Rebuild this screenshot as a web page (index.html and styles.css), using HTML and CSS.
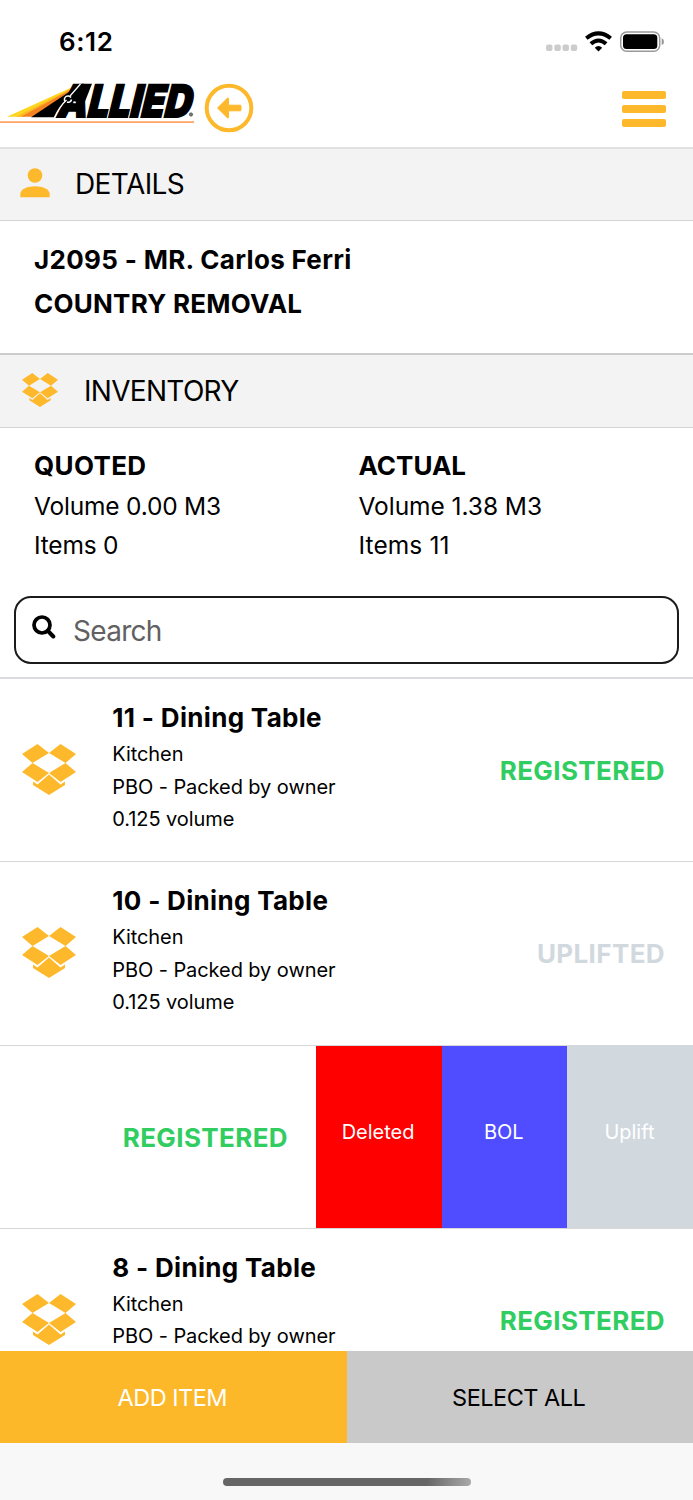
FILE: index.html
```html
<!DOCTYPE html>
<html lang="en">
<head>
<meta charset="utf-8">
<title>Allied Inventory</title>
<link rel="stylesheet" href="styles.css">
</head>
<body>
<svg width="0" height="0" class="defs">
  <symbol id="box" viewBox="0 0 54 51">
    <path d="M15.500 0 27 9 38.500 0 54 10 43.500 19 54 28 38.500 38 27 29 15.500 38 0 28 10.500 19 0 10Z M27 9 10.500 19 27 29 43.500 19Z" fill-rule="evenodd"/>
    <path d="M27 30.500 38.500 40.500 43 37.500V41L27 51 11 41V37.500L15.500 40.500Z"/>
  </symbol>
</svg>
<div class="screen">
  <header class="top">
    <div class="status-bar">
      <span class="clock">6:12</span>
      <svg class="indicators" width="120" height="24" viewBox="0 0 120 24">
        <g fill="#ccc"><rect x="1" y="15.500" width="6.500" height="6.500" rx="2"/><rect x="9.300" y="15.500" width="6.500" height="6.500" rx="2"/><rect x="17.500" y="15.500" width="6.500" height="6.500" rx="2"/><rect x="25.700" y="15.500" width="6.500" height="6.500" rx="2"/></g>
        <g fill="none" stroke="#000" stroke-width="4"><path d="M41.300 9.300Q53.500-.5 65.700 9.300"/><path d="M45.900 14.800Q53.500 8.200 61.100 14.800"/></g>
        <path d="M49.800 18.700Q53.500 15.400 57.200 18.700L53.500 22.500Z"/>
        <rect x="75.700" y="3" width="39" height="19.300" rx="6" fill="none" stroke="#999" stroke-width="1.500"/>
        <rect x="78" y="5.300" width="34.300" height="14.700" rx="3.500"/>
        <path d="M116.700 9.300Q119 10.100 119 12.800T116.700 16.300Z" fill="#999"/>
      </svg>
    </div>
    <div class="nav">
      <svg class="logo" width="196" height="44" viewBox="0 0 196 44">
        <path d="M7 36.800 77 5 82 4 22 36.800Z" fill="#ffd51f"/>
        <path d="M16 36.800 79 5 82 4 24 36.800Z" fill="#fdb927"/>
        <path d="M21 36.800 81 4 34 36.800Z" fill="#f58220"/>
        <path d="M31 37.300 81 4 66 19 54 37.300Z"/>
        <g transform="translate(57.500 36.500) skewX(-6)"><text x="0" y="0" class="wordmark" textLength="134" lengthAdjust="spacingAndGlyphs">ALLIED</text></g>
        <path d="M70 20 82 3.700H92L84 24Z"/>
        <path d="M54.500 37.500Q59 27 66.500 20M70 16 80.500 4" fill="none" stroke="#fff" stroke-width="1.300"/>
        <path d="M65 21.500A3.300 3.300 0 1 1 71 17.500M71.500 19.500A3.300 3.300 0 0 1 67 22" fill="none" stroke="#fff" stroke-width="1.500"/>
        <circle cx="191" cy="34.500" r="1.700" fill="#777" stroke="#444" stroke-width=".6"/>
        <path d="M0 42.200H194" stroke="#ffa265" stroke-width="1.700"/>
      </svg>
      <svg class="back" width="50" height="50" viewBox="0 0 50 50">
        <circle cx="25" cy="25" r="22.300" fill="none" stroke="#fdb92b" stroke-width="4"/>
        <path d="M13.500 25 23.300 15.300Q24.500 14.500 24.500 15.800V22.200H36.300Q37 22.200 37 23V27Q37 27.800 36.300 27.800H24.500V34.200Q24.500 35.500 23.300 34.700Z" fill="#fdb92b" stroke="#fdb92b" stroke-linejoin="round"/>
      </svg>
      <div class="menu"><i></i><i></i><i></i></div>
    </div>
  </header>
  <div class="section details-bar">
    <svg width="30" height="30" viewBox="0 0 30 30" class="gold"><circle cx="15" cy="7.500" r="7.300"/><path d="M.3 29.300V26C.3 21 8 18.300 15 18.300S29.700 21 29.700 26V29.300Z"/></svg>
    <span class="t-details">DETAILS</span>
  </div>
  <div class="job">
    <div class="t-job">J2095 - MR. Carlos Ferri</div>
    <div class="t-type">COUNTRY REMOVAL</div>
  </div>
  <div class="section inventory-bar">
    <svg width="36" height="34" class="gold"><use href="#box"/></svg>
    <span class="t-inventory">INVENTORY</span>
  </div>
  <div class="totals">
    <div class="total"><b class="quoted">QUOTED</b><span class="vol">Volume 0.00 M3</span><span class="num">Items 0</span></div>
    <div class="total actual"><b>ACTUAL</b><span class="vol">Volume 1.38 M3</span><span class="num">Items 11</span></div>
  </div>
  <div class="search">
    <svg width="24" height="24" viewBox="0 0 24 24" fill="none" stroke="#000"><circle cx="10" cy="10" r="8" stroke-width="3.700"/><path d="M16 16 21.300 21.500" stroke-width="4" stroke-linecap="round"/></svg>
    <span>Search</span>
  </div>
  <div class="list">
    <div class="row">
      <svg class="gold" width="54" height="51"><use href="#box"/></svg>
      <div class="info"><b>11 - Dining Table</b><span>Kitchen</span><span>PBO - Packed by owner</span><span>0.125 volume</span></div>
      <div class="state registered">REGISTERED</div>
    </div>
    <div class="row">
      <svg class="gold" width="54" height="51"><use href="#box"/></svg>
      <div class="info"><b>10 - Dining Table</b><span>Kitchen</span><span>PBO - Packed by owner</span><span>0.125 volume</span></div>
      <div class="state uplifted">UPLIFTED</div>
    </div>
    <div class="row swiped">
      <div class="state registered">REGISTERED</div>
      <div class="actions"><div class="delete">Deleted</div><div class="bol">BOL</div><div class="uplift">Uplift</div></div>
    </div>
    <div class="row">
      <svg class="gold" width="54" height="51"><use href="#box"/></svg>
      <div class="info"><b>8 - Dining Table</b><span>Kitchen</span><span>PBO - Packed by owner</span></div>
      <div class="state registered">REGISTERED</div>
    </div>
  </div>
  <div class="buttons"><div class="add">ADD ITEM</div><div class="select">SELECT ALL</div></div>
  <div class="home"><div class="home-indicator"></div></div>
</div>
</body>
</html>
```

FILE: styles.css
```css
* { box-sizing: border-box; }
body { margin: 0; background: #fff; color: #000; font-family: Inter, "Liberation Sans", sans-serif; }
.defs { position: absolute; }
.screen { width: 693px; height: 1500px; display: flex; flex-direction: column; overflow: hidden; }
.screen > * { flex-shrink: 0; }
.gold { fill: #fdb92b; }
svg { display: block; flex: none; }

.top { height: 149px; border-bottom: 2px solid #e0e0e0; }
.status-bar { height: 80px; display: flex; justify-content: space-between; padding: 29px 28px 0 59px; }
.clock { font-size: 26px; font-weight: 600; line-height: 26px; letter-spacing: .6px; }
.nav { display: flex; }
.logo { margin-right: 8px; overflow: visible; }
.back { margin-top: 3px; }
.wordmark { font: italic 900 44.500px Inter, sans-serif; stroke: #000; stroke-width: 1.800px; }
.menu { margin: 10.500px 27px 0 auto; width: 44px; display: flex; flex-direction: column; gap: 6.200px; }
.menu i { height: 8px; border-radius: 2px; background: #fdb92b; }

.section { display: flex; align-items: center; background: #f3f3f3; font-size: 28px; line-height: 34px; }
.details-bar { height: 72px; padding-left: 20px; gap: 25px; border-bottom: 1px solid #d4d4d4; padding-bottom: 2px; }
.details-bar svg { margin-bottom: 2px; }
.t-details { letter-spacing: -.6px; }
.inventory-bar { height: 75px; padding-left: 22px; gap: 26px; border-top: 2px solid #ccc; border-bottom: 1px solid #d4d4d4; }
.inventory-bar svg { margin-bottom: 2px; }
.t-inventory { letter-spacing: -.7px; }
.job { height: 132px; padding: 17px 34px; font-size: 26px; font-weight: 700; line-height: 44px; }
.t-job { letter-spacing: .32px; }
.t-type { letter-spacing: .25px; }

.totals { height: 168px; display: flex; padding: 18px 0 0 34px; }
.total { width: 324.500px; display: flex; flex-direction: column; }
.total b { font-size: 26px; line-height: 40px; font-weight: 700; }
.total .quoted { letter-spacing: .35px; }
.total span { font-size: 24.500px; line-height: 39px; letter-spacing: -.2px; }
.actual .vol { letter-spacing: -.05px; }
.actual .num { letter-spacing: .1px; }
.total .vol { margin-top: 1px; }

.search { height: 68px; margin: 0 14px; border: 2px solid #1b1b1b; border-radius: 17px; display: flex; align-items: center; padding-left: 16px; gap: 17px; font-size: 28px; letter-spacing: -.7px; color: #616161; }
.search svg { margin-bottom: 6px; }
.search span { padding-top: 1px; }

.list { margin-top: 13px; height: 674px; border-top: 2px solid #dcdce0; overflow: hidden; }
.row { height: 183.300px; display: flex; border-bottom: 1px solid #d8d8d8; padding-left: 22.300px; }
.row > .gold { margin: 65px 36px 0 0; }
.info { padding-top: 20px; display: flex; flex-direction: column; }
.info b { font-size: 26px; line-height: 38px; font-weight: 700; letter-spacing: .32px; }
.info span { font-size: 20px; line-height: 32.600px; letter-spacing: -.08px; position: relative; top: 1px; }
.state { margin: 76px 28px 0 auto; font-size: 26px; line-height: 32px; font-weight: 700; letter-spacing: .38px; }
.registered { color: #32cd61; }
.uplifted { color: #d1d9df; }
.swiped { padding: 0; }
.actions { width: 377px; display: flex; }
.actions div { flex: 1; display: flex; align-items: center; justify-content: center; padding: 0 1.500px 9px 0; color: #fff; font-size: 20px; }
.actions .delete { background: #f00; }
.actions .bol { background: #4f4dff; }
.actions .uplift { background: #d1d9df; }

.buttons { height: 92px; display: flex; font-size: 23.500px; letter-spacing: -.5px; }
.buttons div { flex: 1; display: flex; align-items: center; justify-content: center; padding-right: 2px; }
.add { background: #fcb829; color: #fff; }
.select { background: #c9c9c9; }
.home { flex: 1; background: #f8f8f8; padding-top: 35px; }
.home-indicator { width: 248px; height: 8px; margin: 0 auto; border-radius: 4px; background: linear-gradient(100deg, #666 82%, #aaa); }
```
